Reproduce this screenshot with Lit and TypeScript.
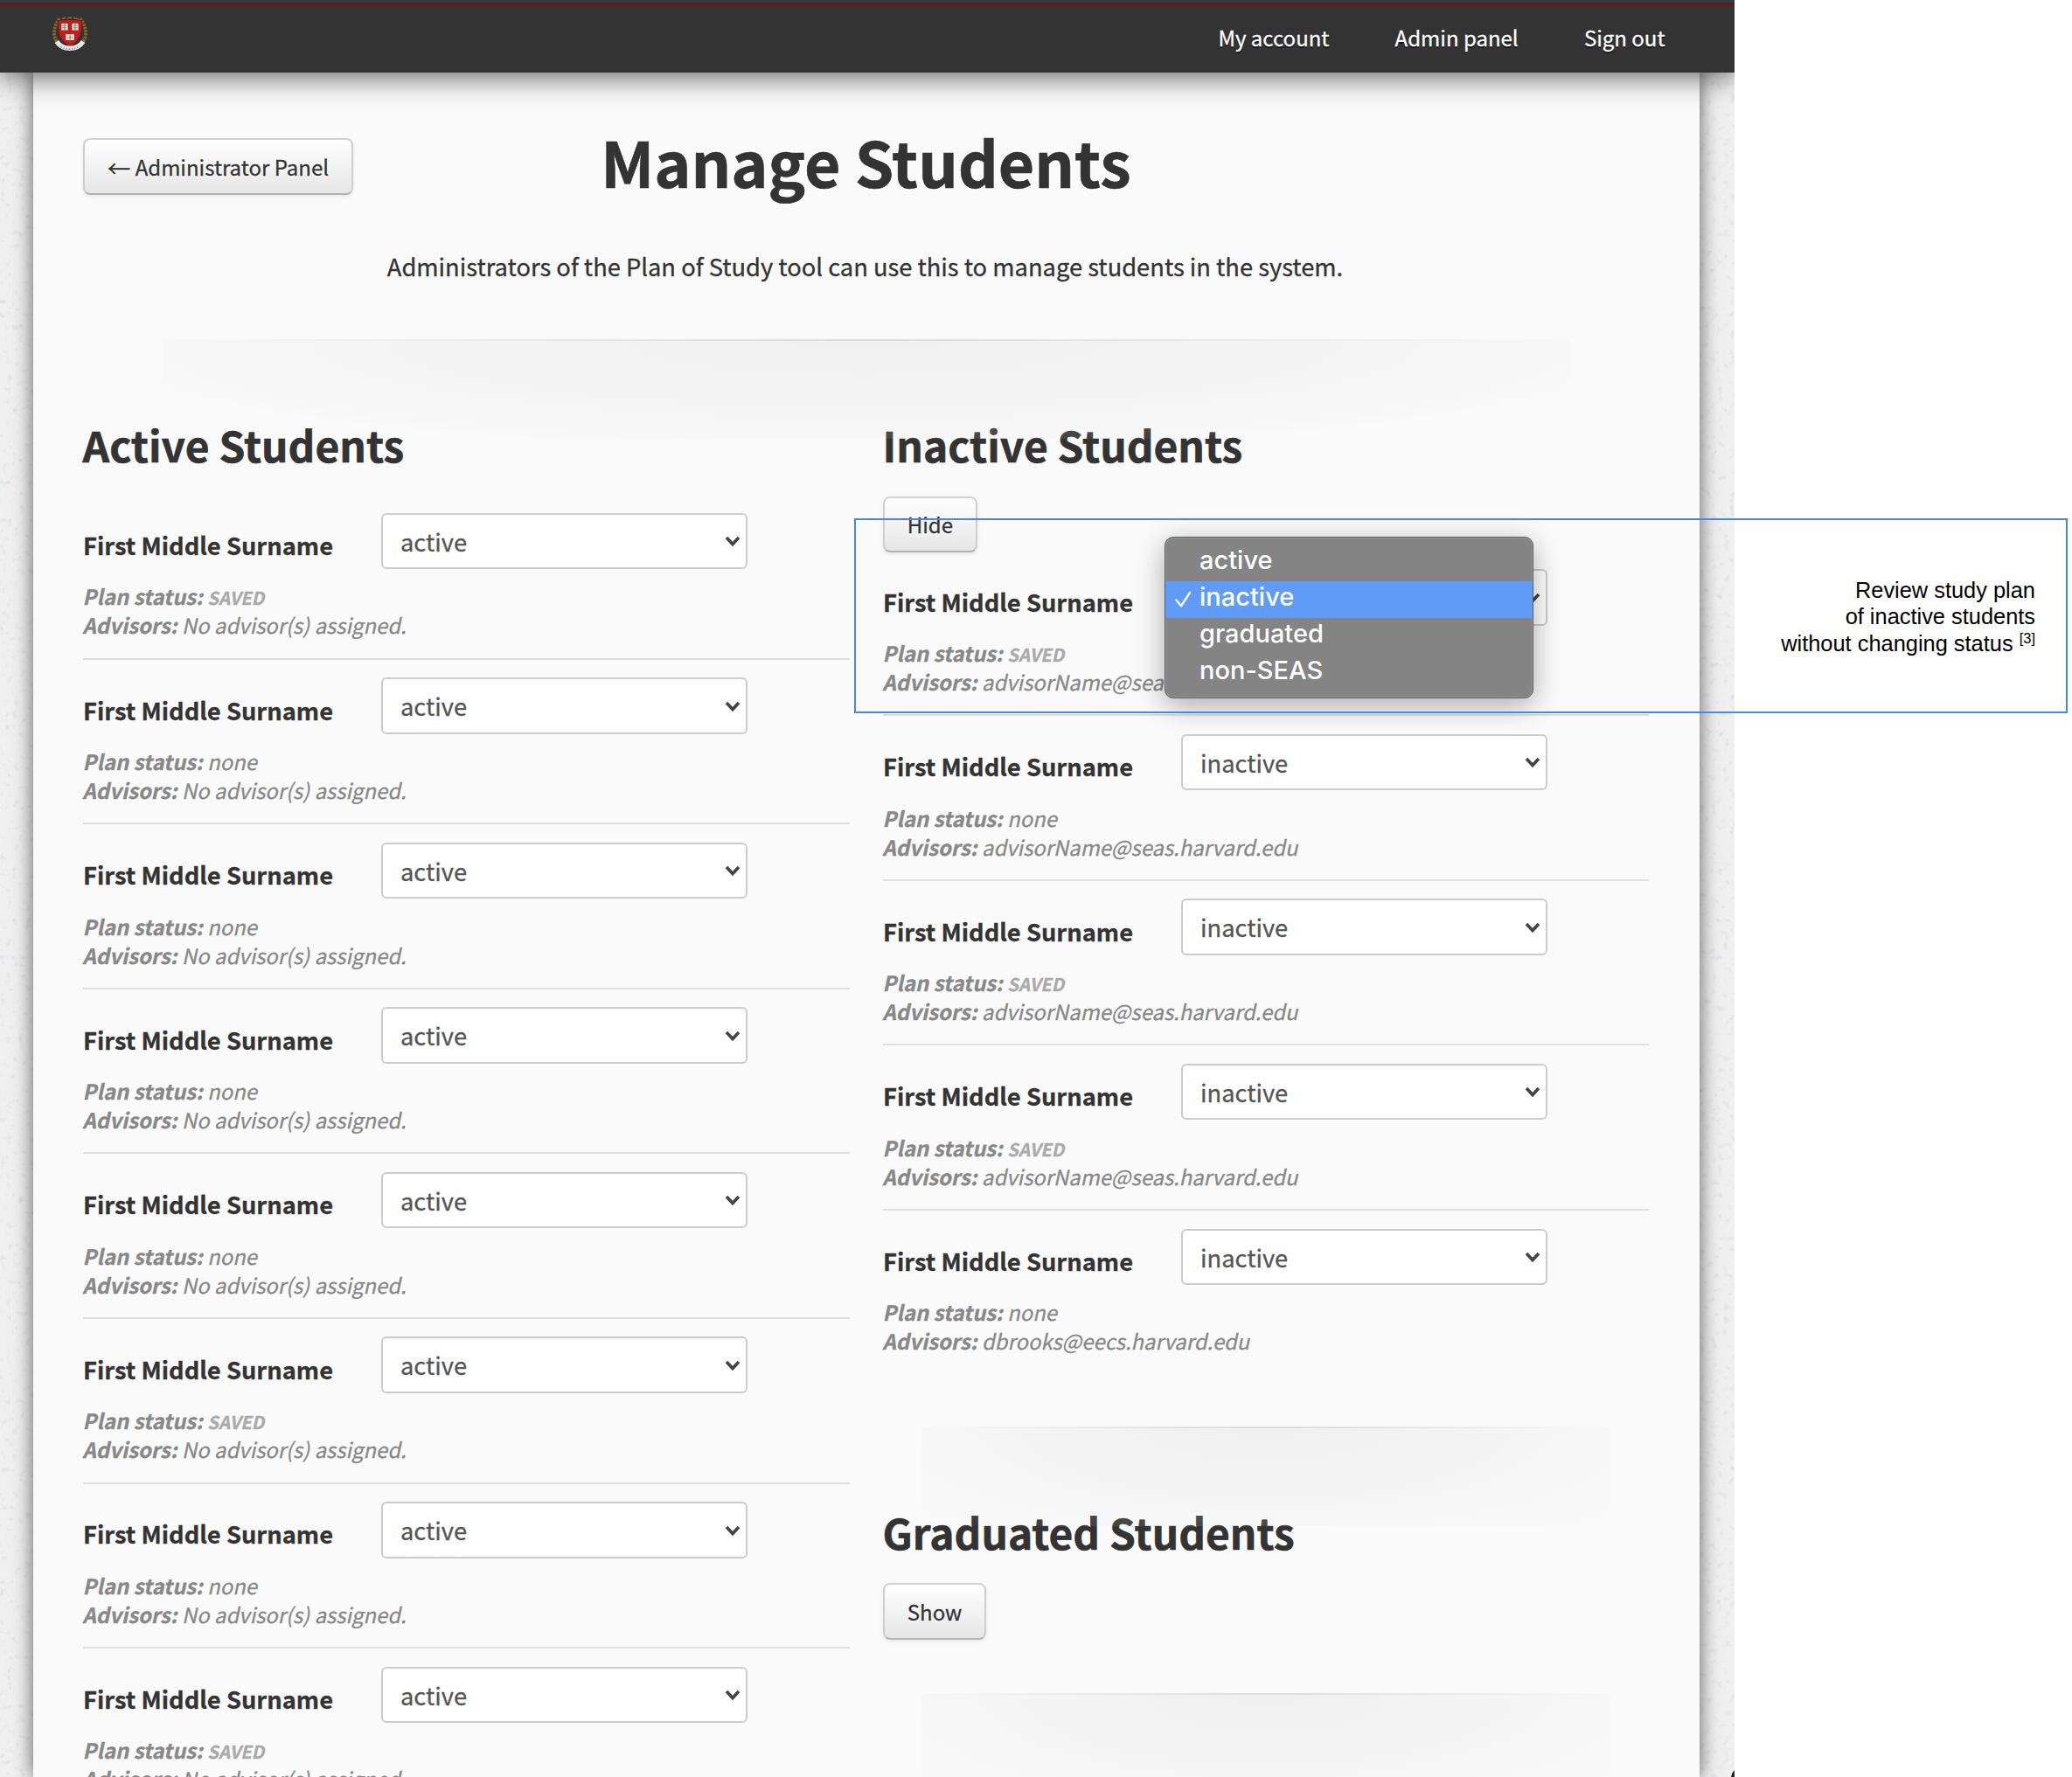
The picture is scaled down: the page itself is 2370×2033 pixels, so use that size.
import { LitElement, html, css, nothing } from "lit";
import { customElement, property } from "lit/decorators.js";

interface Student {
  status: string;
  plan: "SAVED" | "none";
  advisors: string;
}

const NONE_ASSIGNED = "No advisor(s) assigned.";
const ADVISOR = "advisorName@seas.harvard.edu";

const activeStudents: Student[] = (
  ["SAVED", "none", "none", "none", "none", "SAVED", "none", "SAVED"] as const
).map((plan) => ({ status: "active", plan, advisors: NONE_ASSIGNED }));

const inactiveStudents: Student[] = [
  { status: "inactive", plan: "SAVED", advisors: ADVISOR },
  { status: "inactive", plan: "none", advisors: ADVISOR },
  { status: "inactive", plan: "SAVED", advisors: ADVISOR },
  { status: "inactive", plan: "SAVED", advisors: ADVISOR },
  { status: "inactive", plan: "none", advisors: "dbrooks@eecs.harvard.edu" },
];

@customElement("harvard-crest")
class HarvardCrest extends LitElement {
  static styles = css`
    :host { display: block; width: 40px; height: 40px; }
    svg { display: block; }
  `;
  render() {
    return html`
      <svg width="40" height="40" viewBox="0 0 40 40" fill="none">
        <path d="M8.500 2.500C3 8 1.500 15 2.200 21.500s2.800 6 4.300 8" stroke="#806728" stroke-width="4" stroke-dasharray="2.600 1" />
        <path d="M31.500 2.500C37 8 38.500 15 37.800 21.500s-2.800 6-4.300 8" stroke="#806728" stroke-width="4" stroke-dasharray="2.600 1" />
        <path d="M11 2.500l4-1.500M17 1.800l5-.8M24 1.300l6 1.800" stroke="#7d6527" stroke-width="2" />
        <path d="M6.500 4.500q6.500-1 13.500-1t13.500 1q.8 13.500-2.500 19Q27.500 30.500 20 34.500 12.500 30.500 9 23.500 5.700 18 6.500 4.500z" fill="#bb1f1c" stroke="#5c1512" stroke-width=".8" />
        <g fill="#e2dedc">
          <rect x="10.300" y="7.800" width="7.300" height="7.800" />
          <rect x="22.300" y="7.800" width="7.300" height="7.800" />
          <path d="M15.200 19.800l4.800.5 4.900-.5v7l-4.900.5-4.800-.5z" />
        </g>
        <path d="M13.900 8v7.500M26 8v7.500M20.100 20.800v6.400" stroke="#8a6a68" stroke-width=".9" />
        <path d="M11.200 10.300h5M11.200 12.600h5M23.500 10.300h5M23.500 12.600h5M16.800 23.800h6.600" stroke="#8b8583" stroke-width=".8" />
        <path d="M4.800 28.500Q10 36.300 20 36.300T35.200 28.500" stroke="#e6e6e6" stroke-width="5.400" />
        <path d="M9.500 34.300Q14 37.200 20 37.200t10.500-2.900" stroke="#9a9a9a" stroke-width="1.800" stroke-dasharray="1.500 1.700" />
      </svg>
    `;
  }
}

@customElement("status-menu")
class StatusMenu extends LitElement {
  static styles = css`
    :host {
      display: block;
      box-sizing: border-box;
      width: 422px;
      height: 185px;
      padding-top: 8px;
      border: 1px solid #5c5c5c;
      border-radius: 10px;
      background: #848484;
      box-shadow: inset 0 0 0 1px #999, 0 8px 32px rgba(0, 0, 0, 0.32);
      font: 500 29px/36px Inter, "Liberation Sans", sans-serif;
      color: #fff;
    }
    .item {
      display: grid;
      grid-template-columns: 39px 1fr;
      height: 42px;
    }
    .current { background: #619bf8; }
    .tick { display: block; margin: 11px 0 0 11px; }
  `;
  render() {
    return html`${["active", "inactive", "graduated", "non-SEAS"].map(
      (label) => html`
        <div class="item ${label === "inactive" ? "current" : ""}">
          <span>
            ${label === "inactive"
              ? html`<svg class="tick" width="19" height="20" viewBox="0 0 19 20" fill="none">
                  <path d="M1.500 10.500l5.500 6.800L17 2" stroke="#fff" stroke-width="2.300" stroke-linecap="round" stroke-linejoin="round" />
                </svg>`
              : nothing}
          </span>
          <span>${label}</span>
        </div>
      `
    )}`;
  }
}

@customElement("student-row")
class StudentRow extends LitElement {
  @property({ attribute: false }) student!: Student;
  @property({ type: Boolean }) open = false;

  static styles = css`
    :host {
      display: block;
      box-sizing: border-box;
      height: 188.570px;
      padding-top: 20.500px;
      border-bottom: 2px solid #dfdfdf;
    }
    :host(.last) { border-bottom-color: transparent; }
    .top {
      display: grid;
      grid-template-columns: 341px 418.500px;
      align-items: start;
      height: 78.800px;
    }
    .name {
      margin-top: 20.400px;
      font-weight: 700;
      font-size: 27.300px;
      line-height: 32px;
    }
    .select {
      position: relative;
      box-sizing: border-box;
      display: flex;
      justify-content: space-between;
      height: 64.500px;
      padding: 0 6px 0 20px;
      border: 2px solid #ccc;
      border-radius: 6px;
      background: #fff;
      color: #555;
      font-size: 27.300px;
      line-height: 60px;
    }
    .chevron { display: block; margin-top: 22.500px; }
    status-menu {
      position: absolute;
      left: -21px;
      top: -39.600px;
      z-index: 2;
      -webkit-text-stroke: 0;
    }
    .meta {
      color: #888;
      font-size: 23.850px;
      line-height: 33px;
      white-space: nowrap;
    }
    .slant { transform: skewX(-12deg); transform-origin: 0 75%; }
    .saved { font-weight: 700; font-size: 20.400px; line-height: 1; color: #aaa; }
  `;
  render() {
    const { status, plan, advisors } = this.student;
    return html`
      <div class="top">
        <div class="name">First Middle Surname</div>
        <div class="select">
          <span>${status}</span>
          <svg class="chevron" width="18" height="16" viewBox="0 0 18 16" fill="none">
            <path d="M2 4l7 7.500L16 4" stroke="#444" stroke-width="3.600" />
          </svg>
          ${this.open ? html`<status-menu></status-menu>` : nothing}
        </div>
      </div>
      <div class="meta">
        <div class="slant"><b>Plan status:</b> ${plan === "SAVED" ? html`<span class="saved">SAVED</span>` : plan}</div>
        <div class="slant"><b>Advisors:</b> ${advisors}</div>
      </div>
    `;
  }
}

@customElement("app-root")
class AppRoot extends LitElement {
  static styles = css`
    :host {
      display: block;
      position: relative;
      width: 2370px;
      height: 2033px;
      overflow: hidden;
      background: #fff;
      color: #333;
      font-family: "Noto Sans CJK SC", "Open Sans", sans-serif;
      -webkit-text-stroke: 0.3px;
    }
    .app {
      position: relative;
      width: 1983.500px;
      height: 2033px;
      overflow: hidden;
      background: #f0f0f0;
    }
    .grain { position: absolute; inset: 0; }
    .header {
      position: relative;
      z-index: 1;
      box-sizing: border-box;
      display: flex;
      justify-content: space-between;
      height: 83px;
      padding: 18.500px 79px 0 60px;
      background: linear-gradient(#35353a 0 4px, #2a2326 4px 5px, #7a1512 5px 7px, #333 7.500px);
      box-shadow: 0 1px 36px rgba(0, 0, 0, 0.75);
    }
    .nav {
      display: flex;
      gap: 75.200px;
      height: 47px;
      color: #fff;
      font-size: 24px;
      line-height: 47px;
      text-shadow: 0 2px 0 #111;
    }
    .paper {
      position: relative;
      box-sizing: border-box;
      width: 1906px;
      height: 1950px;
      margin-left: 38px;
      padding: 75px 58px 0 57px;
      background: #fafafa;
      box-shadow: 0 0 21px rgba(0, 0, 0, 0.62);
    }
    .title-row {
      display: grid;
      grid-template-columns: 1fr auto 1fr;
      align-items: start;
      height: 64px;
    }
    h1, h2, p { margin: 0; }
    h1, h2 { -webkit-text-stroke: 0.6px; }
    h1 { padding-top: 1px; font-size: 71.500px; line-height: 51.600px; }
    h2 { margin-left: -0.500px; font-size: 47.900px; line-height: 64px; }
    .intro {
      margin-top: 63.800px;
      padding-right: 2px;
      text-align: center;
      font-size: 27.300px;
      line-height: 36px;
    }
    .btn {
      box-sizing: border-box;
      display: block;
      width: fit-content;
      height: 64.500px;
      margin: 0;
      padding: 0 25.800px;
      border: 2px solid #ccc;
      border-color: #d2d2d2 #cfcfcf #b3b3b3;
      border-radius: 8px;
      background: linear-gradient(#fff, #e6e6e6);
      box-shadow: 0 2px 4px rgba(0, 0, 0, 0.07);
      color: #333;
      font: 400 24px/59px "Noto Sans CJK SC", "Open Sans", sans-serif;
      -webkit-text-stroke: 0.3px;
      text-shadow: 0 2px 2px rgba(255, 255, 255, 0.75);
      white-space: nowrap;
    }
    .arrow { position: relative; top: 2px; font-size: 26.500px; line-height: 1; }
    .toggle { margin-top: 27.200px; }
    .rule {
      position: relative;
      height: 2px;
      background: linear-gradient(90deg, transparent 5%, rgba(0, 0, 0, 0.12) 50%, transparent 95%);
    }
    .rule::after {
      content: "";
      position: absolute;
      z-index: 1;
      left: 5%;
      right: 5%;
      top: 1px;
      height: 113px;
      background: radial-gradient(farthest-corner at 50% 0, rgba(225, 225, 225, 0.42), rgba(225, 225, 225, 0));
    }
    .rule.main::after {
      background: radial-gradient(farthest-corner at 50% 0, rgba(225, 225, 225, 0.42), rgba(225, 225, 225, 0.1) 72%, rgba(225, 225, 225, 0) 80%);
    }
    .rule.main { margin: 66.200px 0 86.400px; }
    .rule.second { margin: 58.300px 0 86.100px; }
    .rule.third { margin-top: 61.500px; }
    .columns {
      display: grid;
      grid-template-columns: 877px 876px;
      gap: 38px;
    }
    .rows { margin-top: 25.800px; }
    .rows.after-toggle { margin-top: -1.300px; }
    .corner { position: absolute; right: 0; bottom: 0; }
    .note {
      position: absolute;
      z-index: 3;
      box-sizing: border-box;
      left: 977px;
      top: 592.500px;
      width: 1388px;
      height: 223px;
      padding: 65px 35px 0 0;
      border: 2px solid #4a86e8;
      color: #000;
      text-align: right;
      font: 25.400px/30.500px "Liberation Sans", Arial, sans-serif;
      -webkit-text-stroke: 0;
    }
    .ref { position: relative; top: -8.500px; font-size: 16.500px; line-height: 0; }
  `;

  private rows(list: Student[], openFirst = false, closed = false) {
    return list.map(
      (student, i) => html`<student-row
        class=${closed && i === list.length - 1 ? "last" : ""}
        .student=${student}
        ?open=${openFirst && i === 0}
      ></student-row>`
    );
  }

  render() {
    return html`
      <div class="app">
        <svg class="grain" width="1984" height="2033">
          <filter id="grain" x="0" y="0" width="100%" height="100%">
            <feTurbulence type="fractalNoise" baseFrequency="0.14" numOctaves="2" seed="4" />
            <feColorMatrix values="0.5 0 0 0 0.35  0 0.5 0 0 0.35  0 0 0.5 0 0.4  0 0 0 5 -2.9" />
          </filter>
          <rect width="1984" height="2033" filter="url(#grain)" opacity=".3" />
        </svg>
        <div class="header">
          <harvard-crest></harvard-crest>
          <div class="nav"><span>My account</span><span>Admin panel</span><span>Sign out</span></div>
        </div>
        <div class="paper">
          <div class="title-row">
            <button class="btn"><span class="arrow">←</span> Administrator Panel</button>
            <h1>Manage Students</h1>
          </div>
          <p class="intro">Administrators of the Plan of Study tool can use this to manage students in the system.</p>
          <div class="rule main"></div>
          <div class="columns">
            <div>
              <h2>Active Students</h2>
              <div class="rows">${this.rows(activeStudents)}</div>
            </div>
            <div>
              <h2>Inactive Students</h2>
              <button class="btn toggle">Hide</button>
              <div class="rows after-toggle">${this.rows(inactiveStudents, true, true)}</div>
              <div class="rule second"></div>
              <h2>Graduated Students</h2>
              <button class="btn toggle">Show</button>
              <div class="rule third"></div>
            </div>
          </div>
        </div>
        <svg class="corner" width="4" height="8" viewBox="0 0 4 8"><path d="M4 0v8H0Q1 3 4 0z" fill="#222" /></svg>
      </div>
      <div class="note">
        <div>Review study plan</div>
        <div>of inactive students</div>
        <div>without changing status <span class="ref">[3]</span></div>
      </div>
    `;
  }
}
